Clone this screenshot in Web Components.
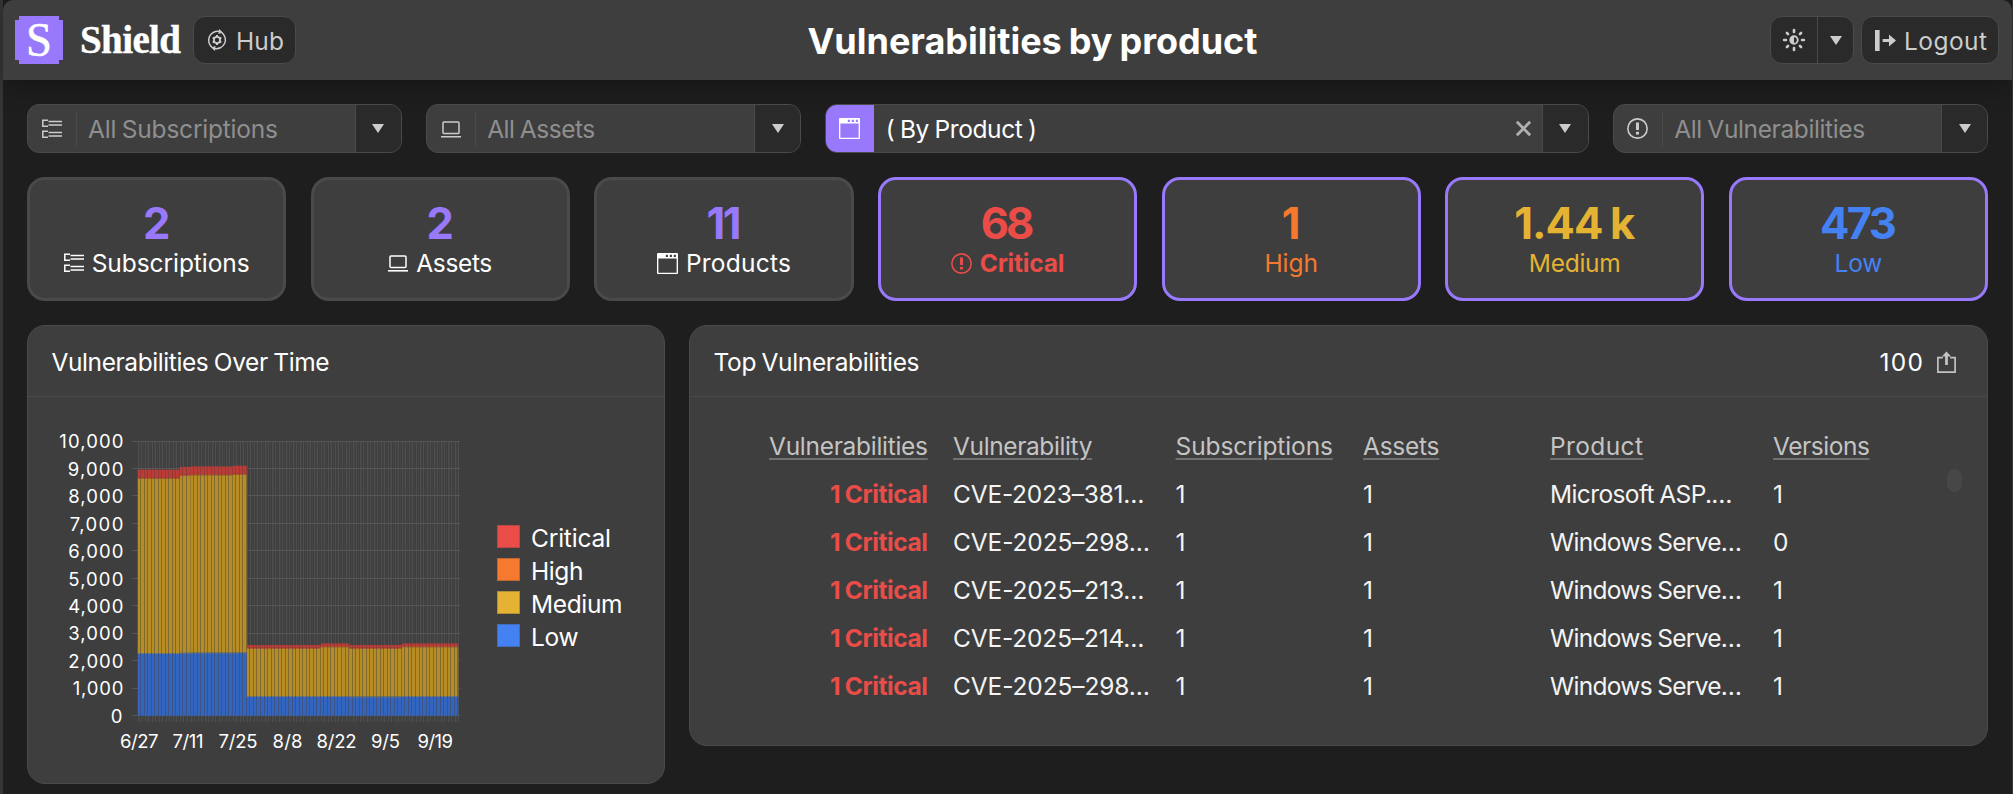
<!DOCTYPE html>
<html lang="en">
<head>
<meta charset="utf-8">
<title>Vulnerabilities by product</title>
<style>
html{height:100%;background:#1e1e1e}
body{margin:0;height:794px;overflow:hidden;background:#1e1e1e;font-family:Inter,"Open Sans",sans-serif;font-size:24.5px;color:#fff}
</style>
</head>
<body>
<sh-app></sh-app>
<script>
const define = (name, html, ready) => {
  const t = document.createElement('template');
  t.innerHTML = html;
  customElements.define(name, class extends HTMLElement {
    connectedCallback() {
      if (this.shadowRoot) return;
      this.attachShadow({mode: 'open'}).appendChild(t.content.cloneNode(true));
      if (ready) ready.call(this, this.shadowRoot);
    }
  });
};

/* Icons, drawn on a 20-unit grid */
const icons = {
  subs: '<g fill="none" stroke="currentColor" stroke-width="1.5"><path d="M6 1.2H.8v6H6M6 12.2H.8v6H6"/><path d="M6.5 2.6H20M6.5 6H20M6.5 13.4H20M6.5 17H20"/></g>',
  laptop: '<g fill="none" stroke="currentColor" stroke-width="1.5"><rect x="2" y="3" width="16" height="11.5" rx="1"/><path d="M0 17.8h20" stroke-width="1.6"/></g>',
  window: '<path fill="currentColor" fill-rule="evenodd" d="M1 0h18a1 1 0 0 1 1 1v18a1 1 0 0 1-1 1H1a1 1 0 0 1-1-1V1a1 1 0 0 1 1-1zM1.3 5.3v13.4h17.4V5.3zM8.4 1.7v2.2h2V1.7zM12.2 1.7v2.2h2V1.7zM16 1.7v2.2h2V1.7z"/>',
  alert: '<circle cx="10" cy="10" r="9.2" fill="none" stroke="currentColor" stroke-width="1.5"/><path fill="currentColor" d="M8.6 4.4h2.8v7H8.6zM8.6 13h2.8v2.6H8.6z"/>',
  hub: '<g fill="none" stroke="currentColor"><path stroke-width="1.5" d="M5.2 17.4A8.9 8.9 0 0 1 12.6 1.6M14.8 2.6A8.9 8.9 0 0 1 7.4 18.4"/><circle cx="10" cy="10" r="3.1" stroke-width="1.8"/><path stroke-width="2" d="M10 5v2.2M10 12.8V15M5.7 7.5l1.9 1.1M12.4 11.4l1.9 1.1M5.7 12.5l1.9-1.1M12.4 8.6l1.9-1.1"/></g><path fill="currentColor" d="M12.2-1l3.6 3.6-4.4 1.4zM7.8 21l-3.6-3.6 4.4-1.4z"/>',
  sun: '<circle cx="10" cy="10" r="3.4" fill="none" stroke="currentColor" stroke-width="1.7"/><path fill="currentColor" d="M10 6.3a3.7 3.7 0 0 0 0 7.4z"/><path stroke="currentColor" stroke-width="2.4" stroke-linecap="round" d="M10 1v1.7M10 17.3V19M1 10h1.7M17.3 10H19M3.6 3.6l1 1M15.4 15.4l1 1M3.6 16.4l1-1M15.4 4.6l1-1"/>',
  logout: '<path fill="currentColor" d="M0 0h4.4v20H0zM7.3 8.6h6V4.2L20 10l-6.7 5.8v-4.4h-6z"/>',
  share: '<path fill="none" stroke="currentColor" stroke-width="1.6" d="M6.5 5.3H1.8v13.9h16.4V5.3h-4.7"/><path fill="currentColor" d="M8.7 12.4V4.4H5.6L10-.4l4.4 4.8h-3.1v8z"/>',
  down: '<path fill="currentColor" d="M0 0h12L6 9z"/>',
  close: '<path fill="none" stroke="currentColor" stroke-width="3" d="M3 3l14 14M17 3L3 17"/>'
};
define('sh-icon', '<style>:host{display:block;flex:none;line-height:0}svg{display:block;overflow:visible}</style><svg></svg>', function (r) {
  const n = this.getAttribute('name'), s = +(this.getAttribute('size') || 20), v = r.querySelector('svg');
  const w = n === 'down' ? 12 : s, h = n === 'down' ? 9 : s;
  v.setAttribute('width', w); v.setAttribute('height', h);
  v.setAttribute('viewBox', n === 'down' ? '0 0 12 9' : '0 0 20 20');
  v.innerHTML = icons[n];
});

/* Single line of text, tracked so that it fills the given width */
define('sh-text', `<style>:host{display:inline-block;white-space:nowrap}span{display:inline-block;white-space:pre;word-spacing:-.04em}
:host([u]) span{text-decoration:underline;text-decoration-color:#707070;text-decoration-thickness:2px;text-underline-offset:3px}</style><span><slot></slot></span>`, function (r) {
  const w = +this.getAttribute('w'), s = r.querySelector('span');
  if (!w) return;
  const n = this.textContent.length;
  const ls = (w - s.getBoundingClientRect().width) / Math.max(1, n - 1);
  s.style.letterSpacing = ls.toFixed(3) + 'px';
  s.style.marginRight = (-ls).toFixed(3) + 'px';
});

define('sh-logo', `<style>:host{display:block;flex:none;width:48px;height:48px;background:#9878fb;color:#fff;
clip-path:polygon(4px 0,44px 0,44px 4px,48px 4px,48px 44px,44px 44px,44px 48px,4px 48px,4px 44px,0 44px,0 4px,4px 4px);
font:44px/50px "Liberation Serif",serif;text-align:center}span{display:block;-webkit-text-stroke:.5px #fff;transform:translateY(-.5px) scale(1.06,1.1)}</style><span>S</span>`);

define('sh-button', `<style>:host{display:flex;box-sizing:border-box;height:47.5px;align-items:center;border:1px solid #4a4a4a;border-radius:12px;background:#2a2a2a;color:#ccc;line-height:46px;flex:none}</style><slot></slot>`);

define('sh-header', `<style>
:host{display:flex;box-sizing:border-box;height:80px;padding:0 13px 0 12px;align-items:center;background:#3e3e3e;border-radius:10px 10px 0 0;box-shadow:0 4px 28px rgba(0,0,0,.32);position:relative}
.brand{font:bold 39px/48px "Liberation Serif",serif;-webkit-text-stroke:.4px #fff;margin:0 12px 0 17px}
.brand sh-text{top:0}
h1{flex:1;margin:0;text-align:center;font-size:36px;line-height:80px;font-weight:650}
h1 sh-text{left:-.5px;top:1px}
.hub{width:103px;padding-left:13px;gap:9px}
.split{width:84px;margin-right:7px}
.a{width:46px;display:flex;justify-content:center;border-right:1px solid #4a4a4a;height:100%;align-items:center}
.b{flex:1;display:flex;justify-content:center}
.out{width:138px;padding-left:13px;gap:8px}
sh-text{position:relative;top:.5px}
</style><sh-logo></sh-logo><span class="brand"><sh-text w="101">Shield</sh-text></span>
<sh-button class="hub"><sh-icon name="hub"></sh-icon><sh-text w="48">Hub</sh-text></sh-button>
<h1><sh-text w="450">Vulnerabilities by product</sh-text></h1>
<sh-button class="split"><span class="a"><sh-icon name="sun" size="22"></sh-icon></span><span class="b"><sh-icon name="down"></sh-icon></span></sh-button>
<sh-button class="out"><sh-icon name="logout" size="21"></sh-icon><sh-text w="83">Logout</sh-text></sh-button>`);

define('sh-filter', `<style>
:host{display:flex;box-sizing:border-box;height:49px;flex:1;align-items:center;border:1px solid #4a4a4a;border-radius:12px;background:#3e3e3e;color:#8f8f8f;overflow:hidden;line-height:48px}
:host([active]){flex:none;width:763.5px;color:#fff}
.i{width:47.5px;height:35px;display:flex;align-items:center;justify-content:center;border-right:1px solid #4a4a4a;color:#ccc}
:host([active]) .i{height:100%;background:#9878fb;color:#fff;border-color:#9878fb;width:47px}
.t{flex:1;padding:1px 0 0 11.5px}
.x{color:#b0b0b0;display:none;margin-right:9px}:host([active]) .x{display:block}
.d{width:45px;height:100%;border-left:1px solid #4a4a4a;background:#2a2a2a;display:flex;align-items:center;justify-content:center;color:#ccc}
</style><span class="i"></span><span class="t"><slot></slot></span><sh-icon class="x" name="close" size="19"></sh-icon><span class="d"><sh-icon name="down"></sh-icon></span>`, function (r) {
  const n = this.getAttribute('icon');
  r.querySelector('.i').innerHTML = `<sh-icon name="${n}" size="${n === 'subs' || n === 'laptop' ? 20 : 21}"></sh-icon>`;
});

define('sh-stat', `<style>
:host{display:block;box-sizing:border-box;flex:1 1 0;height:124px;border:3px solid #4a4a4a;border-radius:18px;background:#3e3e3e;padding-top:21px;text-align:center}
:host([on]){border-color:#9878fb}
.n{font-size:43.5px;font-weight:700;line-height:44px}
.l{display:flex;justify-content:center;align-items:center;gap:8px;line-height:38px;height:36px}
.l slot{display:contents}
</style><div class="n"><slot name="n"></slot></div><div class="l"><slot></slot></div>`);

define('sh-panel', `<style>
:host{display:block;box-sizing:border-box;border:1px solid #4a4a4a;border-radius:18px;background:#3e3e3e}
.h{display:flex;align-items:center;height:68px;padding:2px 30px 0 23.5px;border-bottom:1px solid #4a4a4a}
.h slot[name=tools]{display:flex;align-items:center}
.g{flex:1}
</style><div class="h"><slot name="title"></slot><span class="g"></span><slot name="tools"></slot></div><slot></slot>`);

/* Stacked daily bars, one per day from 6/27 to 9/25 */
define('sh-chart', `<style>:host{display:block}svg{display:block}text{font-family:Inter,sans-serif;font-size:18.5px;fill:#fff}</style><svg width="437" height="386" viewBox="28 397 437 386"></svg>`, function (r) {
  const x0 = 137.7, step = 3.5225, base = 715.7, k = 27.44;
  let s = '';
  const rect = (x, y, w, h, c) => { s += `<rect x="${x.toFixed(2)}" y="${y}" width="${w.toFixed(2)}" height="${h.toFixed(2)}" fill="${c}"/>`; };
  for (let i = 0; i < 91; i++) rect(Math.round(x0 + (i + .5) * step), 441, 1, 281, '#444');
  for (let i = 0; i <= 91; i++) rect(Math.round(x0 + i * step), 441, 1, 281, '#4e4e4e');
  for (let i = 0; i <= 10; i++) rect(132.5, Math.round(base - i * k - .7), 327.5, 1, '#565656');
  const runs = [[0,12,653,478.7,469.7],[12,15,652.7,475.8,467],[15,27,652.5,475.3,466.5],[27,31,652.3,474.7,465.8],[31,52,696,648.7,645],[52,60,696,647.2,643.5],[60,75,696.4,648.7,645],[75,91,696,647.2,643.5]];
  for (const [a, b, low, med, crit] of runs) {
    const x = x0 + a * step, w = (b - a) * step;
    rect(x, low, w, base - low, '#3165bf');
    rect(x, med, w, low - med, '#b58d24');
    rect(x, med - 1, w, 1, '#c4602b');
    rect(x, crit, w, med - 1 - crit, '#bb3c37');
    rect(x, low, w, 1, '#7d7c63');
    for (let i = a + 1; i <= b; i++) {
      const g = Math.round(x0 + i * step) - 1;
      rect(g, low, 1, base - low, '#3d5586');
      rect(g, med, 1, low - med, '#806a32');
      rect(g, crit, 1, med - crit, '#963a38');
    }
  }
  const tx = (t, x, y, w) => { s += `<text x="${x}" y="${y}" textLength="${w}">${t}</text>`; };
  const ws = [12.5, 50.5, 55, 55, 55, 55, 55, 53.5, 55, 55.5, 64];
  for (let i = 0; i <= 10; i++) tx(i ? i + ',000' : '0', 123.3 - ws[i], (base - i * k + 7).toFixed(1), ws[i]);
  [['6/27',120,38.5],['7/11',172.5,31],['7/25',218.5,39],['8/8',272.5,30],['8/22',316.5,40],['9/5',371,29],['9/19',417.5,35.5]].forEach(a => tx(a[0], a[1], 747.7, a[2]));
  r.querySelector('svg').innerHTML = s;
});

define('sh-legend', `<style>
:host{display:block;padding-top:123px}
div{display:flex;align-items:center;height:33px;gap:11px}
i{width:23px;height:23px;box-sizing:border-box;border:1px solid rgba(62,62,62,.3)}
sh-text{position:relative;top:1.5px}
</style>
<div><i style="background:#ea4c48"></i><sh-text w="80">Critical</sh-text></div>
<div><i style="background:#f5792f"></i><sh-text w="52.5">High</sh-text></div>
<div><i style="background:#e5b333"></i><sh-text w="91.5">Medium</sh-text></div>
<div><i style="background:#4482f4"></i><sh-text w="47.5">Low</sh-text></div>`);

define('sh-table', `<style>
:host{display:flex;padding:25px 25px 35px 23.5px;justify-content:space-between}
.g{display:grid;grid-template-columns:214.5px 197.5px 162.5px 162px 198px 162px;column-gap:25px;grid-auto-rows:48px;line-height:48px;color:#f4f4f4;white-space:nowrap}
.g>:nth-child(6n+1){text-align:right}
.c{color:#ea4c48;font-weight:650}
.h{color:#c4c4c4}
.s{width:15px;height:23px;border-radius:8px;background:#474747;margin-top:47px}
</style><div class="g"></div><div class="s"></div>`, function (r) {
  const t = (x, w, u) => `<sh-text w="${w}"${u ? ' u' : ''}>${x}</sh-text>`;
  let s = [['Vulnerabilities',159],['Vulnerability',139.5],['Subscriptions',157.5],['Assets',76.5],['Product',93],['Versions',97]].map(a => `<span class="h">${t(a[0], a[1], true)}</span>`).join('');
  [['CVE-2023–381…',191.5,'Microsoft ASP.…',182.5,1],['CVE-2025–298…',197,'Windows Serve…',192,0],['CVE-2025–213…',191.5,'Windows Serve…',192,1],['CVE-2025–214…',191.5,'Windows Serve…',192,1],['CVE-2025–298…',197,'Windows Serve…',192,1]].forEach(([a, w, b, v, n]) => {
    s += `<span class="c">${t('1 Critical', 98)}</span><span>${t(a, w)}</span><span>1</span><span>1</span><span>${t(b, v)}</span><span>${n}</span>`;
  });
  r.querySelector('.g').innerHTML = s;
});

define('sh-app', `<style>
:host{display:block;box-sizing:border-box;height:794px;border-left:3px solid #363636;border-right:1px solid #363636;background:#1e1e1e}
.f,.s,.p{position:relative;display:flex;padding:24px 24px 0;gap:24.33px}
.p{align-items:flex-start}
.l{width:637.7px;height:459px}
.r{flex:1;height:421px}
.c{display:flex;gap:32px}
</style>
<sh-header></sh-header>
<div class="f">
<sh-filter icon="subs"><sh-text w="190">All Subscriptions</sh-text></sh-filter>
<sh-filter icon="laptop"><sh-text w="108">All Assets</sh-text></sh-filter>
<sh-filter icon="window" active><sh-text w="151">( By Product )</sh-text></sh-filter>
<sh-filter icon="alert"><sh-text w="191">All Vulnerabilities</sh-text></sh-filter>
</div>
<div class="s">
<sh-stat><sh-text slot="n" style="color:#9878fb">2</sh-text><sh-icon name="subs"></sh-icon><sh-text w="158">Subscriptions</sh-text></sh-stat>
<sh-stat><sh-text slot="n" style="color:#9878fb">2</sh-text><sh-icon name="laptop"></sh-icon><sh-text w="76">Assets</sh-text></sh-stat>
<sh-stat><sh-text slot="n" w="35" style="color:#9878fb">11</sh-text><sh-icon name="window" size="21"></sh-icon><sh-text w="105">Products</sh-text></sh-stat>
<sh-stat on style="color:#ea4c48"><sh-text slot="n" w="53.5">68</sh-text><sh-icon name="alert" size="21"></sh-icon><sh-text w="84.5" style="font-weight:650">Critical</sh-text></sh-stat>
<sh-stat on style="color:#f5792f"><sh-text slot="n">1</sh-text><sh-text w="53.5">High</sh-text></sh-stat>
<sh-stat on style="color:#e5b333"><sh-text slot="n" w="121">1.44 k</sh-text><sh-text w="92">Medium</sh-text></sh-stat>
<sh-stat on style="color:#4482f4"><sh-text slot="n" w="77">473</sh-text><sh-text w="48">Low</sh-text></sh-stat>
</div>
<div class="p">
<sh-panel class="l"><sh-text slot="title" w="278">Vulnerabilities Over Time</sh-text><div class="c"><sh-chart></sh-chart><sh-legend></sh-legend></div></sh-panel>
<sh-panel class="r"><sh-text slot="title" w="206">Top Vulnerabilities</sh-text><sh-text slot="tools" w="43.5" style="margin-right:13px">100</sh-text><sh-icon slot="tools" name="share" size="21" style="color:#c4c4c4"></sh-icon><sh-table></sh-table></sh-panel>
</div>`);
</script>
</body>
</html>
